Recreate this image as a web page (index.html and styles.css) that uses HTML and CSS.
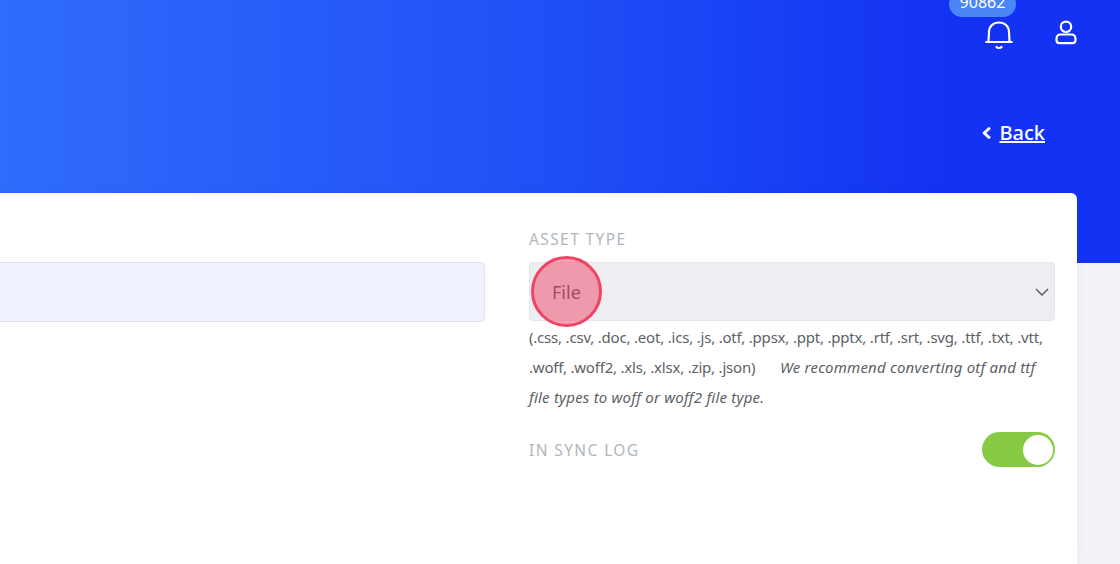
FILE: index.html
```html
<html>
    <head>
        <title>Asset</title>
        <link rel="stylesheet" href="styles.css">
    </head>
    <body>
        <header class="hero">
            <div class="top-icons">
                <div class="bell-wrap">
                    <span class="badge">90862</span>
                    <svg class="bell" width="28" height="32" viewBox="0 0 28 32" fill="none" stroke="#fff" stroke-width="2.2" stroke-linecap="round" stroke-linejoin="round">
                        <path d="M3.5 21.5C3.5 18 4 15 4 12C4 6.5 8 2.5 14 2.5S24 6.5 24 12C24 15 24.5 18 24.5 21.5"/>
                        <path d="M1.2 22H26.8"/>
                        <path d="M11.5 27C12.5 28.3 15.5 28.3 16.5 27"/>
                    </svg>
                </div>
                <svg class="user" width="22" height="25" viewBox="0 0 22 25" fill="none" stroke="#fff" stroke-width="2.2">
                    <circle cx="11" cy="6.8" r="5.2"/>
                    <path d="M5.5 14.5H16.5C19 14.5 20.5 16.5 20.5 19V20C20.5 22 19.5 23.2 17.5 23.2H4.5C2.5 23.2 1.5 22 1.5 20V19C1.5 16.5 3 14.5 5.5 14.5Z"/>
                </svg>
            </div>
            <div class="back-row">
                <svg class="chevron" width="9" height="12" viewBox="0 0 9 12" fill="none" stroke="#fff" stroke-width="3" stroke-linecap="round" stroke-linejoin="round">
                    <path d="M7 1.7L2.2 6L7 10.3"/>
                </svg>
                <a class="back-link" href="#">Back</a>
            </div>
        </header>

        <main class="card">
            <div class="col-left">
                <div class="text-input"></div>
            </div>
            <div class="col-right">
                <label class="field-label">ASSET TYPE</label>
                <div class="select-box">
                    <span class="select-value">File</span>
                    <svg width="14" height="8" viewBox="0 0 14 8" fill="none" stroke="#555" stroke-width="1.4">
                        <path d="M1 1L7 7L13 1"/>
                    </svg>
                    <span class="click-marker"></span>
                </div>
                <p class="help-text">(.css, .csv, .doc, .eot, .ics, .js, .otf, .ppsx, .ppt, .pptx, .rtf, .srt, .svg, .ttf, .txt, .vtt, .woff, .woff2, .xls, .xlsx, .zip, .json) <em class="note">We recommend converting otf and ttf file types to woff or woff2 file type.</em></p>
                <div class="sync-row">
                    <label class="field-label">IN SYNC LOG</label>
                    <span class="toggle"><span class="knob"></span></span>
                </div>
            </div>
        </main>
    </body>
</html>
```

FILE: styles.css
```css
html {
    overflow: hidden;
}

body {
    font-family: "Noto Sans", Arial, sans-serif;
    background-color: #f2f3f9;
    margin: 0;
    height: 564px;
    overflow: hidden;
}

.hero {
    height: 263px;
    box-sizing: border-box;
    padding: 20px 43px 0 0;
    background: linear-gradient(90deg, #2f6cfb 0%, #1f4ff6 50%, #1332f3 85%);
    color: #fff;
}

.top-icons {
    display: flex;
    justify-content: flex-end;
    align-items: flex-start;
    gap: 42px;
}

.bell-wrap {
    position: relative;
    height: 32px;
}

.badge {
    position: absolute;
    top: -29px;
    left: -36px;
    width: 67px;
    height: 26px;
    border-radius: 13px;
    background-color: #4a86f5;
    color: #fff;
    font-size: 16px;
    line-height: 22px;
    text-align: center;
}

.bell {
    display: block;
}

.user {
    display: block;
}

.back-row {
    display: flex;
    justify-content: flex-end;
    align-items: center;
    gap: 8px;
    margin-top: 68px;
    padding-right: 32px;
}

.back-link {
    color: #fff;
    font-size: 20px;
    font-weight: 500;
    line-height: 26px;
}

.card {
    display: grid;
    grid-template-columns: 505px 526px;
    gap: 44px;
    box-sizing: border-box;
    width: 1097px;
    height: 371px;
    margin: -70px 0 0 -20px;
    padding: 36px 22px 0 0;
    background-color: #fff;
    border-radius: 6px 6px 0 0;
    box-shadow: 0 0 12px rgba(60, 70, 140, 0.04);
}

.text-input {
    height: 58px;
    margin-top: 33px;
    background-color: #f0f3fd;
    border: 1px solid #dfe4f2;
    border-radius: 4px;
}

.field-label {
    display: block;
    color: #b0b6bd;
    font-size: 15.5px;
    line-height: 20px;
    letter-spacing: 1.4px;
}

.select-box {
    position: relative;
    display: flex;
    justify-content: space-between;
    align-items: center;
    box-sizing: border-box;
    height: 59px;
    margin-top: 13px;
    padding: 0 5px 0 22px;
    background-color: #edeef1;
    border: 1px solid #e4e6ec;
    border-radius: 4px;
}

.select-value {
    color: #555;
    font-size: 18px;
}

.click-marker {
    position: absolute;
    top: -7px;
    left: 1px;
    box-sizing: border-box;
    width: 71px;
    height: 71px;
    border-radius: 50%;
    background-color: rgba(239, 68, 104, 0.5);
    border: 3px solid #ef4464;
}

.help-text {
    margin: 1px 0 0;
    color: #5c5f66;
    font-size: 15px;
    line-height: 30px;
    letter-spacing: -0.2px;
}

.note {
    margin-left: 21px;
    letter-spacing: 0.2px;
}

.sync-row {
    display: flex;
    justify-content: space-between;
    align-items: center;
    margin-top: 20px;
}

.toggle {
    display: flex;
    justify-content: flex-end;
    align-items: center;
    box-sizing: border-box;
    width: 73px;
    height: 35px;
    padding-right: 2px;
    background-color: #86cb43;
    border-radius: 18px;
}

.knob {
    width: 30px;
    height: 30px;
    border-radius: 50%;
    background-color: #fff;
}
```
